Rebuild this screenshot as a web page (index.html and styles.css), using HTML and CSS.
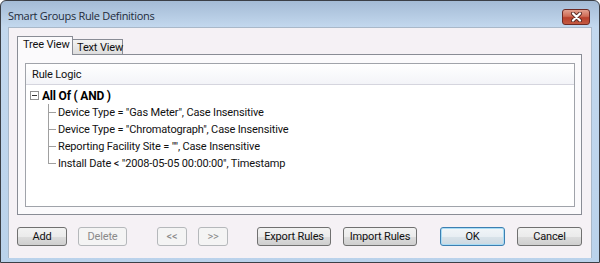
FILE: index.html
```html
<!DOCTYPE html>
<html lang="en">
<head>
    <meta charset="UTF-8">
    <meta name="viewport" content="width=device-width, initial-scale=1.0">
    <title>Smart Groups Rule Definitions</title>
    <link rel="stylesheet" href="styles.css">
</head>
<body>

    <div class="window">
        <div class="titlebar">
            <span class="title">Smart Groups Rule Definitions</span>
            <button class="close" type="button" title="Close">
                <svg width="13" height="10" viewBox="0 0 13 10">
                    <path d="M3 1.5 L10 8.5 M10 1.5 L3 8.5" stroke="#5a2a24" stroke-width="4" stroke-linecap="round"/>
                    <path d="M3 1.5 L10 8.5 M10 1.5 L3 8.5" stroke="#ffffff" stroke-width="2.2" stroke-linecap="round"/>
                </svg>
            </button>
        </div>

        <div class="client">
            <div class="tabs">
                <div class="tab active">Tree View</div>
                <div class="tab">Text View</div>
            </div>

            <div class="tab-panel">
                <div class="listbox">
                    <div class="list-header">Rule Logic</div>
                    <div class="tree">
                        <div class="node root">
                            <span class="expander"></span>
                            <span class="root-label">All Of ( AND )</span>
                        </div>
                        <ul class="children">
                            <li><span class="branch"></span>Device Type = "Gas Meter", Case Insensitive</li>
                            <li><span class="branch"></span>Device Type = "Chromatograph", Case Insensitive</li>
                            <li><span class="branch"></span>Reporting Facility Site = "", Case Insensitive</li>
                            <li class="last"><span class="branch"></span>Install Date &lt; "2008-05-05 00:00:00", Timestamp</li>
                        </ul>
                    </div>
                </div>
            </div>

            <div class="buttons">
                <button type="button" class="btn btn-add">Add</button>
                <button type="button" class="btn btn-delete" disabled>Delete</button>
                <button type="button" class="btn btn-prev" disabled>&lt;&lt;</button>
                <button type="button" class="btn btn-next" disabled>&gt;&gt;</button>
                <button type="button" class="btn btn-export">Export Rules</button>
                <button type="button" class="btn btn-import">Import Rules</button>
                <button type="button" class="btn btn-ok default">OK</button>
                <button type="button" class="btn btn-cancel">Cancel</button>
            </div>
        </div>
    </div>

</body>
</html>
```

FILE: styles.css
```css
body {
    margin: 0;
    font-family: Roboto, "Liberation Sans", sans-serif;
    font-size: 11px;
    letter-spacing: -0.15px;
    color: #111;
}
.window {
    width: 600px;
    height: 263px;
    box-sizing: border-box;
    border: 1px solid #3b3f46;
    border-radius: 6px 6px 0 0;
    background: linear-gradient(#a4bbd5, #c3d8ee 26px, #bad2eb);
    display: flex;
    flex-direction: column;
}
.titlebar {
    height: 26px;
    flex: none;
    display: flex;
    align-items: center;
    padding: 0 9px 0 7px;
}
.title {
    flex: 1;
    font-family: "Open Sans", sans-serif;
    font-size: 11px;
    letter-spacing: -0.3px;
    color: #1e2b3a;
    padding-top: 3px;
}
.close {
    width: 28px;
    height: 16px;
    margin-top: 6px;
    padding: 0;
    border: 1px solid #6e2a24;
    border-radius: 3px;
    background: linear-gradient(#e3a08f, #cf6c56 45%, #b8402c 55%, #c45a42);
    display: flex;
    align-items: center;
    justify-content: center;
}
.client {
    flex: none;
    height: 231px;
    margin: 0 7px;
    box-sizing: border-box;
    background: #f5f1f5;
    border: 1px solid #a9b8c9;
    border-bottom: none;
    padding: 8px 9px 0 8px;
}
.tabs {
    display: flex;
    align-items: flex-end;
    height: 18px;
}
.tab {
    width: 50px;
    height: 15px;
    line-height: 15px;
    box-sizing: border-box;
    padding-left: 4px;
    white-space: nowrap;
    border: 1px solid #898c95;
    border-bottom: none;
    border-left: none;
    background: linear-gradient(#f3f3f3, #dddddd);
}
.tab.active {
    width: 56px;
    height: 19px;
    line-height: 16px;
    padding-left: 5px;
    border-left: 1px solid #898c95;
    background: #fbfafc;
    margin-bottom: -1px;
    position: relative;
    z-index: 1;
}
.tab-panel {
    height: 161px;
    box-sizing: border-box;
    border: 1px solid #898c95;
    background: #fbfafc;
    padding: 8px 6px 7px 7px;
}
.listbox {
    height: 100%;
    box-sizing: border-box;
    border: 1px solid #a0a3aa;
    background: #fff;
}
.list-header {
    height: 21px;
    line-height: 21px;
    box-sizing: border-box;
    padding-left: 6px;
    border-bottom: 1px solid #d5d5de;
    background: linear-gradient(#ffffff, #f3f4f8);
}
.tree {
    padding-top: 2px;
}
.node, .children li {
    height: 17px;
    display: flex;
    align-items: center;
}
.expander {
    width: 9px;
    height: 9px;
    box-sizing: border-box;
    margin-left: 4px;
    border: 1px solid #919191;
    background: linear-gradient(#333, #333) center / 5px 1px no-repeat, #fff;
}
.root-label {
    margin-left: 3px;
    font-weight: bold;
    font-size: 12px;
    letter-spacing: -0.2px;
    color: #000;
}
.children {
    list-style: none;
    margin: 0;
    padding: 0;
}
.branch {
    width: 8px;
    height: 100%;
    margin-left: 22px;
    margin-right: 2px;
    background:
        linear-gradient(#a0a0a0, #a0a0a0) left top / 1px 100% no-repeat,
        linear-gradient(#a0a0a0, #a0a0a0) left center / 100% 1px no-repeat;
}
.children li.last .branch {
    background:
        linear-gradient(#a0a0a0, #a0a0a0) left top / 1px 50% no-repeat,
        linear-gradient(#a0a0a0, #a0a0a0) left center / 100% 1px no-repeat;
}
.buttons {
    display: flex;
    margin-top: 12px;
}
.btn {
    height: 19px;
    padding: 0;
    font-family: Roboto, "Liberation Sans", sans-serif;
    font-size: 11px;
    letter-spacing: -0.15px;
    color: #111;
    border: 1px solid #707070;
    border-radius: 3px;
    background: linear-gradient(#f2f2f2, #ebebeb 50%, #dddddd 50%, #cfcfcf);
}
.btn:disabled {
    color: #8a8a8a;
    border-color: #b5b8bb;
    background: #f4f4f4;
}
.btn.default {
    border-color: #3c7fb1;
    box-shadow: inset 0 0 0 1px #a8dcf5;
    background: linear-gradient(#f1f5f8, #e8eef3 50%, #d9e3ea 50%, #ccd8e1);
}
.btn-add { width: 50px; }
.btn-delete { width: 49px; margin-left: 11px; }
.btn-prev { width: 30px; margin-left: 30px; }
.btn-next { width: 30px; margin-left: 11px; }
.btn-export { width: 74px; margin-left: 29px; }
.btn-import { width: 74px; margin-left: 12px; }
.btn-ok { width: 65px; margin-left: 23px; }
.btn-cancel { width: 65px; margin-left: 12px; }
```
